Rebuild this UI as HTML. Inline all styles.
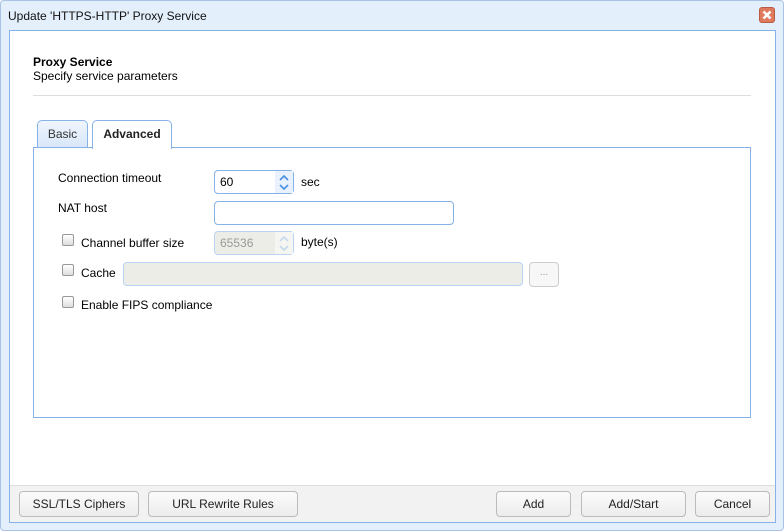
<!DOCTYPE html>
<html><head><style>
*{box-sizing:border-box;margin:0;padding:0}
body{width:784px;height:531px;background:#fff;font-family:"Liberation Sans",Arial,sans-serif;font-size:12px;color:#000;position:relative;overflow:hidden}
.abs{position:absolute}
.frame{left:0;top:0;width:784px;height:531px;background:#e4effc;border:1px solid #a9c3e4;border-radius:4px}
.title{left:8px;top:9px;font-size:12px;color:#111}
.close{left:759px;top:7px;width:16px;height:16px;background:#e07a5f;border:1px solid #b95a42;border-radius:3px}
.inner{left:9px;top:30px;width:767px;height:493px;background:#fff;border:1px solid #86b2e8}
.footer{left:10px;top:485px;width:765px;height:37px;background:#f2f2f2;border-top:1px solid #ddd}
.btn{position:absolute;top:491px;height:26px;border:1px solid #bbb;border-radius:4px;background:linear-gradient(#fbfbfb,#ececec);font-size:12px;text-align:center;line-height:24px;color:#222}
.tab{position:absolute;top:120px;height:28px;border:1px solid #86b2e8;border-bottom:none;border-radius:5px 5px 0 0;font-size:12px;text-align:center;line-height:26px}
.panel{left:33px;top:147px;width:718px;height:271px;border:1px solid #86b2e8}
.inp{position:absolute;border:1px solid #86b2e8;border-radius:4px;background:#fff;height:24px;padding-left:5px;line-height:22px;font-size:12px}
.dis{background:#edede8;border-color:#b9d3f2;color:#999}
.cb{position:absolute;width:12px;height:12px;border:1px solid #999;border-radius:2px;background:linear-gradient(#fff,#ddd)}
.lbl{position:absolute;font-size:12px}
.spin{position:absolute;right:0;top:0;width:18px;height:22px}
</style></head><body>
<div class="abs frame"></div>
<div class="abs title">Update 'HTTPS-HTTP' Proxy Service</div>
<div class="abs close"><svg width="14" height="14" style="display:block"><path d="M3.5 3.5L10.5 10.5M10.5 3.5L3.5 10.5" stroke="#fff" stroke-width="2.6"/></svg></div>
<div class="abs inner"></div>
<div class="abs" style="left:33px;top:55px;font-weight:bold">Proxy Service</div>
<div class="abs" style="left:33px;top:69px">Specify service parameters</div>
<div class="abs" style="left:33px;top:95px;width:718px;height:1px;background:#ddd"></div>
<div class="tab" style="left:37px;width:51px;background:linear-gradient(#f0f6fe,#d7e6f9);color:#333">Basic</div>
<div class="abs panel"></div>
<div class="tab" style="left:92px;width:80px;background:#fff;font-weight:bold;height:29px;color:#222">Advanced</div>
<div class="lbl" style="left:58px;top:171px">Connection timeout</div>
<div class="inp" style="left:214px;top:170px;width:80px">60<div class="spin" style="background:#e8f1fc"><svg width="18" height="22"><path d="M5 9L9 5L13 9M5 14L9 18L13 14" fill="none" stroke="#4a90e2" stroke-width="1.6"/></svg></div></div>
<div class="lbl" style="left:301px;top:175px">sec</div>
<div class="lbl" style="left:58px;top:201px">NAT host</div>
<div class="inp" style="left:214px;top:201px;width:240px"></div>
<div class="cb" style="left:62px;top:234px"></div>
<div class="lbl" style="left:81px;top:236px">Channel buffer size</div>
<div class="inp dis" style="left:214px;top:231px;width:80px">65536<div class="spin" style="background:#f5f5f2"><svg width="18" height="22"><path d="M5 9L9 5L13 9M5 14L9 18L13 14" fill="none" stroke="#c5d8ee" stroke-width="1.6"/></svg></div></div>
<div class="lbl" style="left:301px;top:235px">byte(s)</div>
<div class="cb" style="left:62px;top:264px"></div>
<div class="lbl" style="left:81px;top:266px">Cache</div>
<div class="inp dis" style="left:123px;top:262px;width:400px"></div>
<div class="abs" style="left:529px;top:262px;width:30px;height:25px;border:1px solid #ccc;border-radius:4px;background:#f7f7f7;color:#999;text-align:center;line-height:20px;font-size:10px">...</div>
<div class="cb" style="left:62px;top:296px"></div>
<div class="lbl" style="left:81px;top:298px">Enable FIPS compliance</div>
<div class="abs footer"></div>
<div class="btn" style="left:19px;width:120px">SSL/TLS Ciphers</div>
<div class="btn" style="left:148px;width:150px">URL Rewrite Rules</div>
<div class="btn" style="left:496px;width:75px">Add</div>
<div class="btn" style="left:581px;width:105px">Add/Start</div>
<div class="btn" style="left:695px;width:75px">Cancel</div>
</body></html>
